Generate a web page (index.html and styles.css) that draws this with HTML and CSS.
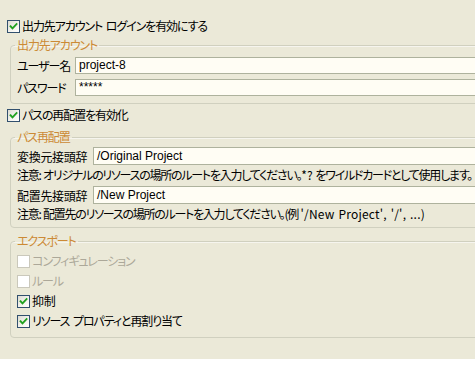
FILE: index.html
```html
<!DOCTYPE html>
<html lang="ja">
<head>
<meta charset="utf-8">
<link rel="stylesheet" href="styles.css">
</head>
<body>
<div class="panel">
  <label class="check-row top-check">
    <span class="box"><svg viewBox="0 0 11 11"><path d="M2.5 5.2 L4.5 7.4 L8.6 3" /></svg></span>
    <span class="text">出力先アカウント ログインを有効にする</span>
  </label>

  <fieldset class="group group-account">
    <legend>出力先アカウント</legend>
    <div class="form-grid account-grid">
      <span class="label">ユーザー名</span>
      <span class="field">project-8</span>
      <span class="label">パスワード</span>
      <span class="field">*****</span>
    </div>
  </fieldset>

  <label class="check-row second-check">
    <span class="box"><svg viewBox="0 0 11 11"><path d="M2.5 5.2 L4.5 7.4 L8.6 3" /></svg></span>
    <span class="text">パスの再配置を有効化</span>
  </label>

  <fieldset class="group group-path">
    <legend>パス再配置</legend>
    <div class="form-grid path-grid">
      <span class="label kanji">変換元接頭辞</span>
      <span class="field tall">/Original Project</span>
      <span class="note">注意: オリジナルのリソースの場所のルートを入力してください。<span class="latin">*?</span> をワイルドカードとして使用します。</span>
      <span class="label kanji">配置先接頭辞</span>
      <span class="field tall">/New Project</span>
      <span class="note">注意: 配置先のリソースの場所のルートを入力してください。(例 <span class="latin">'/New Project', '/', ...)</span></span>
    </div>
  </fieldset>

  <fieldset class="group group-export">
    <legend>エクスポート</legend>
    <label class="check-row item disabled">
      <span class="box"></span>
      <span class="text">コンフィギュレーション</span>
    </label>
    <label class="check-row item disabled">
      <span class="box"></span>
      <span class="text">ルール</span>
    </label>
    <label class="check-row item">
      <span class="box"><svg viewBox="0 0 11 11"><path d="M2.5 5.2 L4.5 7.4 L8.6 3" /></svg></span>
      <span class="text kanji">抑制</span>
    </label>
    <label class="check-row item">
      <span class="box"><svg viewBox="0 0 11 11"><path d="M2.5 5.2 L4.5 7.4 L8.6 3" /></svg></span>
      <span class="text">リソース プロパティと再割り当て</span>
    </label>
  </fieldset>
</div>
</body>
</html>
```

FILE: styles.css
```css
html, body {
  margin: 0;
  padding: 0;
  background: #ffffff;
  overflow: hidden;
}

.panel {
  width: 520px;
  height: 359px;
  box-sizing: border-box;
  background: #ebe9d8;
  padding: 18px 0 0 7px;
  font-family: "Noto Sans CJK JP", "Liberation Sans", sans-serif;
  font-feature-settings: "palt" 1;
  font-size: 12px;
  letter-spacing: -1.1px;
  word-spacing: 2px;
  color: #000000;
}

.check-row {
  display: flex;
  align-items: center;
  gap: 2px;
  height: 16px;
  line-height: 16px;
  white-space: nowrap;
}

.box {
  flex: none;
  width: 13px;
  height: 13px;
  box-sizing: border-box;
  border: 1px solid #32506e;
  background: linear-gradient(135deg, #dcdbd2 0%, #f4f3ee 55%, #ffffff 100%);
  display: flex;
  align-items: center;
  justify-content: center;
}

.box svg {
  width: 11px;
  height: 11px;
}

.box svg path {
  fill: none;
  stroke: #21a121;
  stroke-width: 1.8;
  stroke-linecap: square;
}

.disabled .box {
  border-color: #cac8bb;
  background: #ffffff;
}

.disabled .text {
  color: #aca899;
}

.kanji {
  letter-spacing: -0.3px;
}

.latin {
  letter-spacing: 0.2px;
}

.group {
  margin: 0 0 0 3px;
  padding: 0 0 0 6px;
  border: 1px solid #d0d0bf;
  border-radius: 4px;
  box-shadow: inset 0 1px 0 #f6f5ee;
  min-width: 0;
}

.group legend {
  padding: 0 2px;
  margin-left: -2px;
  line-height: 14px;
  height: 14px;
  color: #cc8a35;
}

.group-account {
  margin-top: 4px;
  padding-top: 5px;
  padding-bottom: 7px;
}

.second-check {
  margin-top: 3px;
}

.group-path {
  margin-top: 7px;
  padding-top: 3px;
  padding-bottom: 3px;
}

.group-export {
  margin-top: 6px;
  padding-top: 3px;
  padding-bottom: 6px;
}

.form-grid {
  display: grid;
  align-items: center;
}

.account-grid {
  grid-template-columns: 58px 1fr;
  row-gap: 5px;
}

.path-grid {
  grid-template-columns: 76px 1fr;
}

.label {
  white-space: nowrap;
  color: #000000;
}

.field {
  height: 17px;
  box-sizing: border-box;
  border: 1px solid #aeb29d;
  background: #fffdf4;
  font-family: "Liberation Sans", sans-serif;
  font-size: 12px;
  letter-spacing: 0;
  word-spacing: 0;
  line-height: 15px;
  padding-left: 3px;
  margin-right: 8px;
  white-space: nowrap;
}

.field.tall {
  height: 18px;
  line-height: 16px;
}

.note {
  grid-column: 1 / -1;
  line-height: 20px;
  height: 20px;
  white-space: nowrap;
  letter-spacing: -1.25px;
  word-spacing: 1px;
}

.path-grid .note:nth-of-type(3) {
  margin-bottom: 1px;
}

.item {
  height: 20px;
  line-height: 20px;
}
```
